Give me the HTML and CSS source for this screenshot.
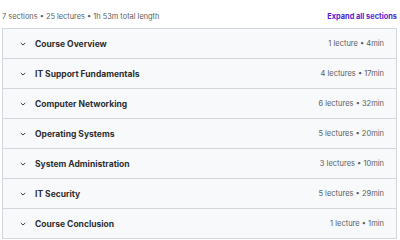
FILE: index.html
```
<!DOCTYPE html>
<html>
<head>
  <title>Course content</title>
  <link rel="stylesheet" href="styles.css">
</head>
<body>
  <div class="summary">
    <span>7 sections • 25 lectures • 1h 53m total length</span>
    <a class="expand" href="#">Expand all sections</a>
  </div>
  <div class="sections">
    <div class="section">
      <span class="chev"><svg width="8" height="8" viewBox="0 0 8 8"><path d="M1.8 3 L4 5 L6.2 3" fill="none" stroke="#3e4143" stroke-width="1"/></svg></span>
      <span class="title">Course Overview</span>
      <span class="meta">1 lecture • 4min</span>
    </div>
    <div class="section">
      <span class="chev"><svg width="8" height="8" viewBox="0 0 8 8"><path d="M1.8 3 L4 5 L6.2 3" fill="none" stroke="#3e4143" stroke-width="1"/></svg></span>
      <span class="title">IT Support Fundamentals</span>
      <span class="meta">4 lectures • 17min</span>
    </div>
    <div class="section">
      <span class="chev"><svg width="8" height="8" viewBox="0 0 8 8"><path d="M1.8 3 L4 5 L6.2 3" fill="none" stroke="#3e4143" stroke-width="1"/></svg></span>
      <span class="title">Computer Networking</span>
      <span class="meta">6 lectures • 32min</span>
    </div>
    <div class="section">
      <span class="chev"><svg width="8" height="8" viewBox="0 0 8 8"><path d="M1.8 3 L4 5 L6.2 3" fill="none" stroke="#3e4143" stroke-width="1"/></svg></span>
      <span class="title">Operating Systems</span>
      <span class="meta">5 lectures • 20min</span>
    </div>
    <div class="section">
      <span class="chev"><svg width="8" height="8" viewBox="0 0 8 8"><path d="M1.8 3 L4 5 L6.2 3" fill="none" stroke="#3e4143" stroke-width="1"/></svg></span>
      <span class="title">System Administration</span>
      <span class="meta">3 lectures • 10min</span>
    </div>
    <div class="section">
      <span class="chev"><svg width="8" height="8" viewBox="0 0 8 8"><path d="M1.8 3 L4 5 L6.2 3" fill="none" stroke="#3e4143" stroke-width="1"/></svg></span>
      <span class="title">IT Security</span>
      <span class="meta">5 lectures • 29min</span>
    </div>
    <div class="section">
      <span class="chev"><svg width="8" height="8" viewBox="0 0 8 8"><path d="M1.8 3 L4 5 L6.2 3" fill="none" stroke="#3e4143" stroke-width="1"/></svg></span>
      <span class="title">Course Conclusion</span>
      <span class="meta">1 lecture • 1min</span>
    </div>
  </div>
</body>
</html>
```
FILE: styles.css
```
body {
  margin: 0;
  padding: 0 3px 0 2px;
  font-family: Inter, "Liberation Sans", sans-serif;
  color: #2d2f31;
  background: #fff;
}
.summary {
  display: flex;
  justify-content: space-between;
  align-items: center;
  height: 24px;
  padding-top: 4px;
  font-size: 7.4px;
  color: #5c6064;
}
.expand {
  color: #5624d0;
  font-weight: 700;
  text-decoration: none;
}
.sections {
  border: 1px solid #d1d7dc;
  border-bottom: none;
}
.section {
  display: flex;
  align-items: center;
  height: 29px;
  padding: 0 12px 0 16px;
  background: #f7f9fa;
  border-bottom: 1px solid #d1d7dc;
}
.chev {
  display: flex;
  width: 16px;
}
.title {
  flex: 1;
  font-size: 8.5px;
  font-weight: 700;
}
.meta {
  font-size: 7.5px;
  color: #5c6064;
}
```
